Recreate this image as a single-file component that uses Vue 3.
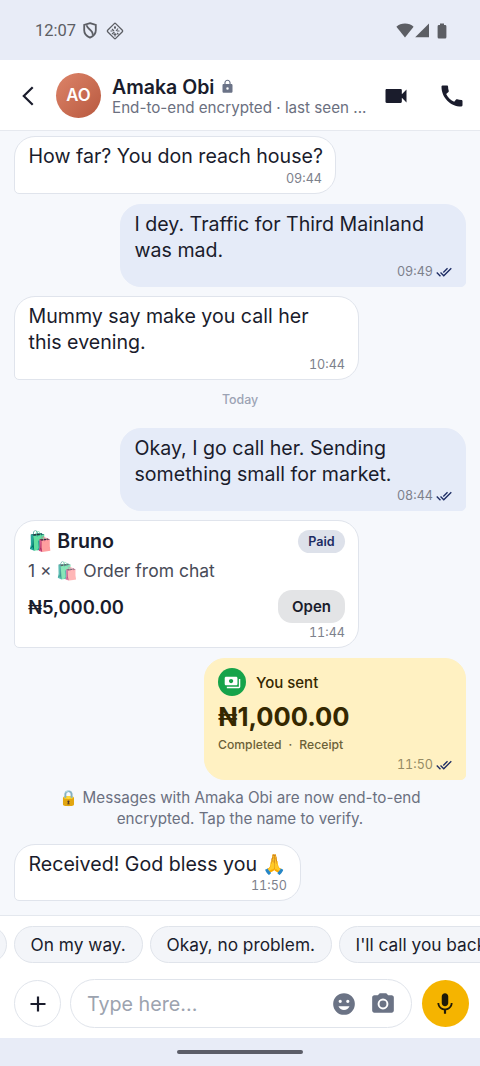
<script setup>
const ticks =
  'M18 7l-1.41-1.41-6.34 6.34 1.41 1.41L18 7zm4.24-1.41L11.66 16.17 7.48 12l-1.41 1.41L11.66 19l12-12-1.42-1.41zM.41 13.41L6 19l1.41-1.41L1.83 12 .41 13.41z'
</script>

<template>
  <div class="screen">
    <div class="status">
      <span class="clock">12:07</span>
      <svg class="shield" width="14" height="17" viewBox="0 0 14 17" fill="none" stroke="#5c5e64" stroke-width="1.8">
        <path d="M7 1.1 12.8 3v5.2c0 3.6-2.4 6-5.8 7.4-3.400-1.400-5.800-3.800-5.800-7.400V3z" />
        <path d="M4 3.200c-.8 3.600 6.500 4.800 5.700 9.800" />
      </svg>
      <svg class="diamond" width="18" height="18" viewBox="0 0 18 18" fill="none" stroke="#5c5e64" stroke-width="1.3">
        <rect x="3.300" y="3.300" width="11.400" height="11.400" rx="1" transform="rotate(45 9 9)" />
        <path d="M9 4v3M6 7l2 2M12 6.500 10 9M4.500 9h2M11 9h2.500M6 12l2.500-2M9 11v3.500M11 11l1.500 1.500M8 5.500h2M7.500 12.500h3" stroke-width="1.200" />
      </svg>
      <span class="grow"></span>
      <svg width="18" height="15" viewBox="0 0 18 15" fill="#5c5e64"><path d="M.4 3.700C2.700 1.700 5.700.6 9 .6s6.300 1.100 8.600 3.100L9 14.400z" /></svg>
      <svg class="signal" width="14" height="15" viewBox="0 0 14 15" fill="#5c5e64"><path d="M14 .5V14.300H.2z" /></svg>
      <svg class="battery" width="10" height="16" viewBox="0 0 10 16" fill="#5c5e64"><path d="M3 .5h4v1.600h1.100q1.300 0 1.300 1.300V14q0 1.500-1.300 1.500H1.900Q.6 15.500.6 14V3.400q0-1.300 1.300-1.300H3z" /></svg>
    </div>

    <header class="header">
      <svg class="back" width="12" height="20" viewBox="0 0 12 20" fill="none" stroke="#1a1c2c" stroke-width="2.200"><path d="M10.700 1.200 1.800 10l8.900 8.800" /></svg>
      <div class="avatar">AO</div>
      <div class="who">
        <div class="name">
          <span>Amaka Obi</span>
          <svg width="15" height="15" viewBox="0 0 24 24" fill="#6b7387"><path fill-rule="evenodd" d="M18 8h-1V6c0-2.760-2.240-5-5-5S7 3.240 7 6v2H6c-1.100 0-2 .9-2 2v10c0 1.100.9 2 2 2h12c1.100 0 2-.9 2-2V10c0-1.100-.9-2-2-2zM8.900 8V6c0-1.710 1.390-3.100 3.100-3.100s3.100 1.390 3.100 3.100v2zM12 17a2 2 0 1 0 0-4 2 2 0 0 0 0 4z" /></svg>
        </div>
        <div class="seen">End-to-end encrypted · last seen ...</div>
      </div>
      <svg class="video" width="28" height="28" viewBox="0 0 24 24" fill="#1a1c2c"><path d="M17 10.500V7c0-.55-.45-1-1-1H4c-.55 0-1 .45-1 1v10c0 .55.45 1 1 1h12c.55 0 1-.45 1-1v-3.500l4 4v-11l-4 4z" /></svg>
      <svg class="phone" width="28" height="28" viewBox="0 0 24 24" fill="#1a1c2c"><path d="M20.010 15.380c-1.230 0-2.420-.2-3.530-.56-.35-.12-.74-.03-1.010.24l-1.570 1.970c-2.830-1.350-5.480-3.900-6.890-6.830l1.950-1.660c.27-.28.35-.67.24-1.020-.37-1.110-.56-2.300-.56-3.530 0-.54-.45-.99-.99-.99H4.190C3.650 3 3 3.240 3 3.990 3 13.280 10.730 21 20.010 21c.71 0 .99-.63.99-1.180v-3.450c0-.54-.45-.99-.99-.99z" /></svg>
    </header>

    <main class="chat">
      <div class="bubble in m1">
        <p>How far? You don reach house?</p>
        <div class="meta">09:44</div>
      </div>
      <div class="bubble out m2">
        <p>I dey. Traffic for Third Mainland<br />was mad.</p>
        <div class="meta">09:49<svg viewBox="0 0 24 24"><path :d="ticks" /></svg></div>
      </div>
      <div class="bubble in m3">
        <p>Mummy say make you call her<br />this evening.</p>
        <div class="meta">10:44</div>
      </div>
      <div class="day">Today</div>
      <div class="bubble out m4">
        <p>Okay, I go call her. Sending<br />something small for market.</p>
        <div class="meta">08:44<svg viewBox="0 0 24 24"><path :d="ticks" /></svg></div>
      </div>
      <div class="bubble in order">
        <div class="row top"><span class="shop">🛍️ Bruno</span><span class="paid">Paid</span></div>
        <div class="item">1 × <span class="faded">🛍️</span> Order from chat</div>
        <div class="row total"><span class="price">₦5,000.00</span><span class="open">Open</span></div>
        <div class="meta">11:44</div>
      </div>
      <div class="bubble out money">
        <div class="sent">
          <span class="coin"><svg width="17" height="17" viewBox="0 0 24 24" fill="#fff"><path fill-rule="evenodd" d="M19 14V6c0-1.100-.9-2-2-2H3c-1.100 0-2 .9-2 2v8c0 1.100.9 2 2 2h14c1.100 0 2-.9 2-2zm-9-1c-1.660 0-3-1.340-3-3s1.340-3 3-3 3 1.340 3 3-1.340 3-3 3zm13-6v11c0 1.100-.9 2-2 2H4v-2h17V7h2z" /></svg></span>
          <span>You sent</span>
        </div>
        <div class="amount">₦1,000.00</div>
        <div class="state"><span>Completed</span><span>·</span><span>Receipt</span></div>
        <div class="meta">11:50<svg viewBox="0 0 24 24"><path :d="ticks" /></svg></div>
      </div>
      <div class="notice">🔒 Messages with Amaka Obi are now end-to-end<br />encrypted. Tap the name to verify.</div>
      <div class="bubble in m7">
        <p>Received! God bless you 🙏</p>
        <div class="meta">11:50</div>
      </div>
    </main>

    <footer class="composer">
      <div class="replies">
        <span class="chip c0"></span>
        <span class="chip c1">On my way.</span>
        <span class="chip c2">Okay, no problem.</span>
        <span class="chip c3">I'll call you back.</span>
      </div>
      <div class="entry">
        <div class="plus"><svg width="16" height="16" viewBox="0 0 16 16" stroke="#1a1c2c" stroke-width="2.200"><path d="M8 .5v15M.5 8h15" /></svg></div>
        <div class="field">
          <span class="hint">Type here...</span>
          <svg width="26" height="26" viewBox="0 0 24 24" fill="#6b7385"><path fill-rule="evenodd" d="M12 2a10 10 0 1 0 0 20 10 10 0 0 0 0-20zM8.500 8a1.500 1.500 0 1 1 0 3 1.500 1.500 0 0 1 0-3zM15.500 8a1.500 1.500 0 1 1 0 3 1.500 1.500 0 0 1 0-3zM12 17.500c-2.330 0-4.310-1.460-5.110-3.500h10.220c-.8 2.040-2.780 3.500-5.110 3.500z" /></svg>
          <svg class="camera" width="26" height="26" viewBox="0 0 24 24" fill="#6b7385"><circle cx="12" cy="12" r="3.200" /><path fill-rule="evenodd" d="M9 2 7.170 4H4c-1.100 0-2 .9-2 2v12c0 1.100.9 2 2 2h16c1.100 0 2-.9 2-2V6c0-1.100-.9-2-2-2h-3.170L15 2zM12 17a5 5 0 1 1 0-10 5 5 0 0 1 0 10z" /></svg>
        </div>
        <div class="mic"><svg width="26" height="26" viewBox="0 0 24 24" fill="#1f1a08"><path d="M12 14c1.660 0 2.990-1.340 2.990-3L15 5c0-1.660-1.340-3-3-3S9 3.340 9 5v6c0 1.660 1.340 3 3 3zm5.300-3c0 3-2.540 5.100-5.300 5.100S6.700 14 6.700 11H5c0 3.410 2.720 6.230 6 6.720V21h2v-3.280c3.280-.48 6-3.300 6-6.720h-1.700z" /></svg></div>
      </div>
    </footer>
    <div class="nav"><span></span></div>
  </div>
</template>

<style>
html,
body {
  margin: 0;
  overflow: hidden;
}
</style>

<style scoped>
* {
  box-sizing: border-box;
}
.screen {
  width: 480px;
  height: 1066px;
  display: flex;
  flex-direction: column;
  overflow: hidden;
  background: #f6f8fc;
  color: #1a1c2c;
  font-family: Inter, "Liberation Sans", "Noto Color Emoji", sans-serif;
  white-space: nowrap;
}
svg {
  display: block;
  flex: none;
}
.grow {
  flex: 1;
}
.status {
  height: 60px;
  flex: none;
  display: flex;
  align-items: center;
  padding: 1px 33px 0 35px;
  background: #e8ecf7;
}
.clock {
  width: 41px;
  font-family: Roboto, sans-serif;
  font-size: 16.5px;
  color: #5c5e64;
}
.shield {
  margin-left: 7px;
}
.diamond {
  margin-left: 9px;
}
.signal {
  margin-left: 1px;
}
.battery {
  margin-left: 8px;
}
.header {
  height: 71px;
  flex: none;
  display: flex;
  align-items: center;
  padding: 1px 14px 0 22px;
  background: #fff;
  border-bottom: 1px solid #e6e9ef;
}
.avatar {
  width: 45px;
  height: 45px;
  margin-left: 22px;
  border-radius: 50%;
  background: linear-gradient(135deg, #dd8469, #b8593f);
  color: #fff;
  font-size: 16.8px;
  font-weight: 600;
  line-height: 45px;
  text-align: center;
}
.who {
  width: 270px;
  flex: none;
  margin-left: 11px;
}
.name {
  display: flex;
  align-items: center;
  gap: 6px;
  height: 25px;
  font-size: 19.5px;
  font-weight: 600;
}
.seen {
  height: 18px;
  line-height: 18px;
  font-size: 15.2px;
  color: #6b7080;
}
.video {
  flex: none;
}
.phone {
  margin-left: 28px;
}
.chat {
  height: 784px;
  flex: none;
  display: flex;
  flex-direction: column;
  align-items: flex-start;
  padding: 5px 14px 0;
}
.bubble {
  flex: none;
  display: flex;
  flex-direction: column;
  padding: 7px 13px 0;
  border: 1px solid #e0e4ec;
  border-radius: 21px 21px 21px 5px;
  background: #fff;
}
.bubble.out {
  align-self: flex-end;
  border-color: #e5ebf8;
  border-radius: 21px 21px 5px 21px;
  background: #e5ebf8;
}
p {
  margin: 0 -1px 0 0.5px;
  font-size: 19.6px;
  line-height: 25.7px;
}
.meta {
  display: flex;
  justify-content: flex-end;
  align-items: center;
  height: 17px;
  font-size: 12.6px;
  font-variant-numeric: tabular-nums;
  color: #7d818c;
}
.meta svg {
  width: 16px;
  height: 16px;
  margin-left: 3px;
  fill: #1c2b63;
}
.m1 {
  width: 322px;
  height: 58px;
}
.m2,
.m4 {
  width: 346px;
  height: 83px;
}
.m2 {
  margin-top: 10px;
}
.m3 {
  width: 345px;
  height: 84px;
  margin-top: 9px;
}
.m3 .meta {
  margin-top: 1px;
}
.day {
  align-self: center;
  height: 16px;
  margin-top: 12px;
  font-size: 12.4px;
  font-weight: 500;
  line-height: 16px;
  color: #9ca3b4;
}
.m4 {
  margin-top: 20px;
}
.order {
  width: 345px;
  height: 128px;
  margin-top: 9px;
  padding-top: 8px;
}
.row {
  display: flex;
  justify-content: space-between;
  align-items: center;
}
.top {
  height: 24px;
}
.shop {
  font-size: 19.6px;
  font-weight: 600;
}
.paid {
  width: 47px;
  height: 23px;
  border-radius: 12px;
  background: #dde1ea;
  color: #1c2b63;
  font-size: 12.6px;
  font-weight: 600;
  line-height: 23px;
  text-align: center;
}
.item {
  height: 24px;
  margin-top: 6px;
  font-size: 17.5px;
  line-height: 24px;
  color: #484b58;
}
.faded {
  opacity: 0.75;
}
.total {
  height: 33px;
  margin-top: 7px;
}
.price {
  font-size: 18.4px;
  font-weight: 600;
}
.open {
  width: 67px;
  height: 33px;
  border-radius: 14px;
  background: #e3e4e6;
  font-size: 15px;
  font-weight: 600;
  line-height: 33px;
  text-align: center;
}
.order .meta {
  margin-top: 1px;
}
.bubble.money {
  width: 262px;
  height: 122px;
  margin-top: 10px;
  padding-top: 9px;
  background: #fff1c2;
  border-color: #fff1c2;
  color: #352800;
}
.sent {
  display: flex;
  align-items: center;
  gap: 10px;
  height: 28px;
  font-size: 15px;
  font-weight: 500;
}
.coin {
  width: 28px;
  height: 28px;
  display: grid;
  place-items: center;
  border-radius: 50%;
  background: #16a34a;
}
.amount {
  height: 35px;
  margin-top: 3px;
  font-size: 25.6px;
  font-weight: 700;
  line-height: 35px;
}
.state {
  display: flex;
  gap: 7px;
  height: 18px;
  margin-top: 2px;
  font-size: 12.2px;
  font-weight: 450;
  line-height: 18px;
  color: #6c6138;
}
.money .meta {
  margin-top: 2px;
  color: #968c65;
}
.notice {
  align-self: center;
  margin-top: 7px;
  height: 42px;
  font-size: 15.2px;
  line-height: 21px;
  text-align: center;
  color: #6b7080;
}
.m7 {
  width: 287px;
  height: 57px;
  margin-top: 15px;
}
.m7 .meta {
  margin-top: -1px;
}
.composer {
  height: 123px;
  flex: none;
  overflow: hidden;
  background: #fff;
  border-top: 1px solid #e4e8ee;
}
.replies {
  display: flex;
  gap: 7px;
  margin: 10px 0 0 -40px;
}
.chip {
  flex: none;
  height: 37px;
  padding-left: 15.5px;
  border: 1px solid #e0e4eb;
  border-radius: 19px;
  background: #f3f5f9;
  font-size: 17.3px;
  line-height: 35px;
}
.c0 {
  width: 47px;
}
.c1 {
  width: 129px;
}
.c2 {
  width: 182px;
}
.c3 {
  width: 170px;
}
.entry {
  display: flex;
  align-items: center;
  height: 49px;
  margin-top: 16px;
  padding-left: 14px;
}
.plus {
  width: 47px;
  height: 47px;
  display: grid;
  place-items: center;
  border: 1px solid #e0e4eb;
  border-radius: 50%;
}
.field {
  width: 342px;
  height: 49px;
  margin-left: 9px;
  display: flex;
  align-items: center;
  padding-left: 16px;
  border: 1px solid #e0e4eb;
  border-radius: 25px;
}
.hint {
  width: 244px;
  font-size: 19.7px;
  color: #9ca3af;
}
.camera {
  margin-left: 13px;
}
.mic {
  width: 47px;
  height: 47px;
  margin-left: 9.5px;
  display: grid;
  place-items: center;
  border-radius: 50%;
  background: #f5b400;
}
.nav {
  height: 28px;
  display: flex;
  align-items: center;
  justify-content: center;
  background: #e8ecf7;
}
.nav span {
  width: 126px;
  height: 4px;
  border-radius: 2px;
  background: #5c5e68;
}
</style>
